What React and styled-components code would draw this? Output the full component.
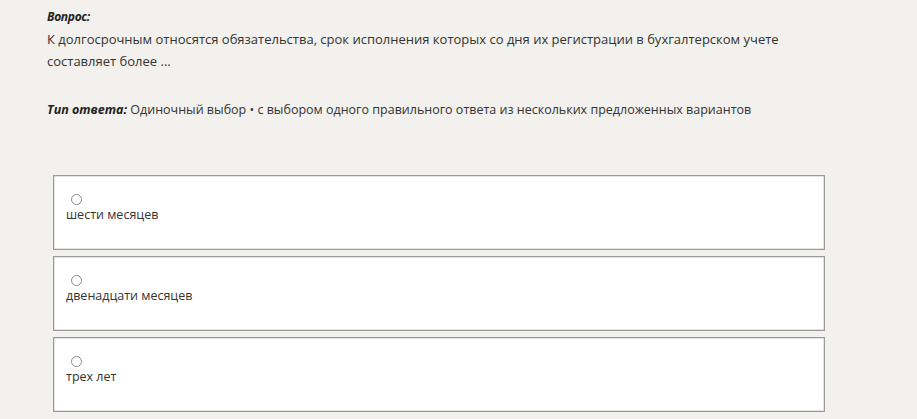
import React from 'react'
import styled, { createGlobalStyle } from 'styled-components'

const GlobalStyle = createGlobalStyle`
  html, body {
    margin: 0;
    padding: 0;
    background: #f2f1ee;
  }
  body {
    font-family: "Open Sans", "Noto Sans", sans-serif;
    color: #333;
  }
`

const Page = styled.div`
  padding: 6px 0 0 47px;
  width: 917px;
  height: 419px;
  box-sizing: border-box;
  overflow: hidden;
`

const Label = styled.div`
  font-size: 12px;
  line-height: 22px;
  font-weight: 700;
  font-style: italic;
  color: #222;
  letter-spacing: -0.3px;
`

const Question = styled.div`
  font-size: 13px;
  line-height: 22px;
  width: 780px;
  color: #333;
`

const AnswerType = styled.div`
  margin-top: 27px;
  font-size: 12.5px;
  line-height: 22px;
  color: #333;

  b {
    font-weight: 700;
    font-style: italic;
    color: #222;
  }
`

const Options = styled.div`
  margin: 54px 0 0 6px;
  display: flex;
  flex-direction: column;
  gap: 6px;
`

const Option = styled.label`
  display: flex;
  flex-direction: column;
  align-items: flex-start;
  box-sizing: border-box;
  width: 772px;
  height: 75px;
  padding: 18px 12px 0;
  background: #fff;
  border: 1px solid #9a9a9a;
  box-shadow: inset 0 0 0 0.5px #c8c8c8;
  cursor: pointer;
`

const Radio = styled.span`
  display: block;
  width: 9px;
  height: 9px;
  margin-left: 5px;
  border: 1px solid #8a8a8a;
  border-radius: 50%;
  background: #fff;
`

const OptionText = styled.span`
  margin-top: 1px;
  font-size: 12.5px;
  line-height: 18px;
  color: #333;
`

const answers = ['шести месяцев', 'двенадцати месяцев', 'трех лет']

export default function App() {
  return (
    <>
      <GlobalStyle />
      <Page>
        <Label>Вопрос:</Label>
        <Question>
          К долгосрочным относятся обязательства, срок исполнения которых со дня их регистрации в бухгалтерском учете составляет более ...
        </Question>
        <AnswerType>
          <b>Тип ответа:</b> Одиночный выбор • с выбором одного правильного ответа из нескольких предложенных вариантов
        </AnswerType>
        <Options>
          {answers.map((a) => (
            <Option key={a}>
              <Radio />
              <OptionText>{a}</OptionText>
            </Option>
          ))}
        </Options>
      </Page>
    </>
  )
}
